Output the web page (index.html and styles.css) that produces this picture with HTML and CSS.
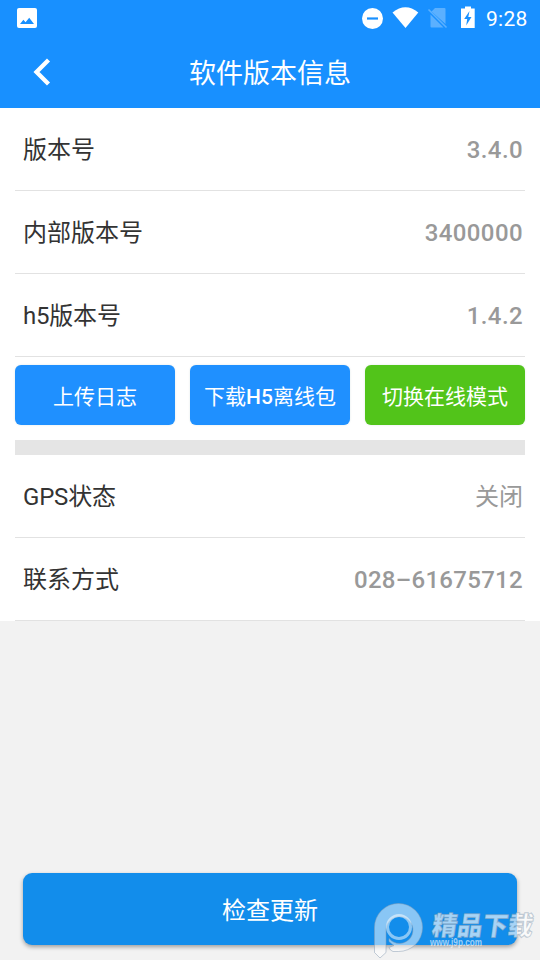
FILE: index.html
```html
<!DOCTYPE html>
<html lang="zh-CN">
<head>
<meta charset="utf-8">
<title>软件版本信息</title>
<link rel="stylesheet" href="styles.css">
</head>
<body>
<div class="screen">
  <div class="status">
    <svg class="status-photo" width="20" height="20" viewBox="0 0 20 20"><rect width="20" height="20" rx="2" fill="#fff"/><path d="M3 16l3.400-4.300 2.200 2.600 3.600-4.600 4.800 6.300z" fill="#1890ff"/></svg>
    <svg class="status-icons" width="118" height="28" viewBox="0 0 118 28">
      <circle cx="12.500" cy="14.500" r="10.500" fill="#fff"/><path d="M7 14.500h11" stroke="#1890ff" stroke-width="2.200"/>
      <path d="M32.500 8.500Q45.500-2 58.300 8.500L45.500 24z" fill="#fff"/>
      <path d="M75 4h9.500q1 0 1 1v15L71.500 7.500z M70.500 10.500L83.500 23.500H71.500q-1 0-1-1z" fill="#5bb0ff"/>
      <path d="M68.500 5.500L86.500 23.500" stroke="#5bb0ff" stroke-width="1.600"/>
      <path d="M105 2.500h6v2h3.700v19.500H101v-19.500h4z" fill="#fff"/><path d="M109.500 7l-5.300 8h3l-1 6.500 5.300-8.500h-3.200z" fill="#1890ff"/>
    </svg>
    <span class="clock">9:28</span>
  </div>
  <header class="navbar">
    <svg class="back" width="20" height="28" viewBox="0 0 20 28"><path d="M16.500 2L4.500 14l12 12" fill="none" stroke="#fff" stroke-width="4.300"/></svg>
    <h1>软件版本信息</h1>
  </header>
  <main class="panel">
    <div class="row"><span class="label">版本号</span><span class="value">3.4.0</span></div>
    <div class="row"><span class="label">内部版本号</span><span class="value">3400000</span></div>
    <div class="row"><span class="label latin">h5版本号</span><span class="value">1.4.2</span></div>
    <div class="actions">
      <button class="action">上传日志</button>
      <button class="action">下载<b>H5</b>离线包</button>
      <button class="action green">切换在线模式</button>
    </div>
    <div class="separator"></div>
    <div class="row"><span class="label latin">GPS状态</span><span class="value cjk">关闭</span></div>
    <div class="row"><span class="label">联系方式</span><span class="value phone">028–61675712</span></div>
  </main>
  <footer class="footer"><button class="update">检查更新</button></footer>
  <div class="watermark">
    <svg width="170" height="62" viewBox="370 898 170 62">
      <g fill="#fff" fill-opacity=".5" stroke="#8a9eb3" stroke-opacity=".5" stroke-width="1">
        <path d="M374.500 927.500a24 24 0 1 1 24 24H393q-3-1-4-4l5-2-5-4v-3a13.500 13.500 0 1 0-3-9v23l-6 5.500-5.500-5.500z"/>
        <circle cx="399" cy="927" r="11.500" fill="none" stroke="#fff" stroke-width="3"/>
        <text class="brand" transform="translate(431 934.500) skewX(-8)" textLength="101" lengthAdjust="spacingAndGlyphs">精品下载</text>
        <text class="site" x="430" y="946" textLength="52" lengthAdjust="spacingAndGlyphs">www.j9p.com</text>
      </g>
    </svg>
  </div>
</div>
</body>
</html>
```
FILE: styles.css
```css
* { box-sizing: border-box; }
body { margin: 0; font-family: Roboto, "Noto Sans CJK SC", sans-serif; color: #333; }
.screen { position: relative; width: 540px; height: 960px; display: flex; flex-direction: column; background: #f2f2f2; overflow: hidden; }
.status { height: 36px; display: flex; align-items: flex-start; background: #1890ff; color: #fff; }
.status-photo { margin: 8px 0 0 17px; }
.status-icons { margin: 4px 0 0 auto; }
.clock { width: 62px; padding: 7px 0 0 8px; font-size: 21px; line-height: 25px; letter-spacing: .3px; }
.navbar { height: 72px; display: grid; grid-template-columns: 64px 1fr 64px; align-items: center; background: #1890ff; color: #fff; }
.back { margin-left: 32px; }
.navbar h1 { margin: 0; padding-top: 4px; text-align: center; font-size: 27px; line-height: 40px; font-weight: 400; }
.panel { padding: 0 15px; background: #fff; }
.row { height: 83px; display: flex; align-items: center; justify-content: space-between; padding: 0 2px 0 8px; border-bottom: 1px solid #e2e2e2; font-size: 24px; }
.label { padding-bottom: 3px; }
.latin { letter-spacing: -.2px; }
.value { padding-top: 2px; color: #999; font-weight: 500; letter-spacing: .4px; }
.value.phone { letter-spacing: .3px; }
.value.cjk { padding: 0 0 3px; font-weight: 400; letter-spacing: 0; }
.actions { display: flex; gap: 15px; padding: 8px 0 15px; }
.action { flex: 1; height: 60px; padding: 4px 0 0; border: 0; border-radius: 6px; background: #1f90ff; color: #fff; font: 400 21px/56px Roboto, "Noto Sans CJK SC", sans-serif; white-space: nowrap; box-shadow: 0 0 2px rgba(0, 80, 80, .15); }
.action b { font-weight: 500; }
.action.green { background: #52c41a; }
.separator { height: 15px; background: #e5e5e5; }
.footer { margin-top: auto; padding: 0 23px 15px; }
.update { display: block; width: 100%; height: 72px; padding: 4px 0 0; border: 0; border-radius: 9px; background: #128deb; color: #fff; font: 400 24px/68px Roboto, "Noto Sans CJK SC", sans-serif; box-shadow: 0 2px 4px rgba(0, 0, 0, .35); }
.watermark { position: absolute; right: 0; bottom: 0; height: 62px; }
.brand { font: 900 26px "Noto Sans CJK SC", sans-serif; fill-opacity: .65; }
.site { font: 700 10px "Liberation Sans", sans-serif; stroke: none; fill-opacity: .6; }
```
